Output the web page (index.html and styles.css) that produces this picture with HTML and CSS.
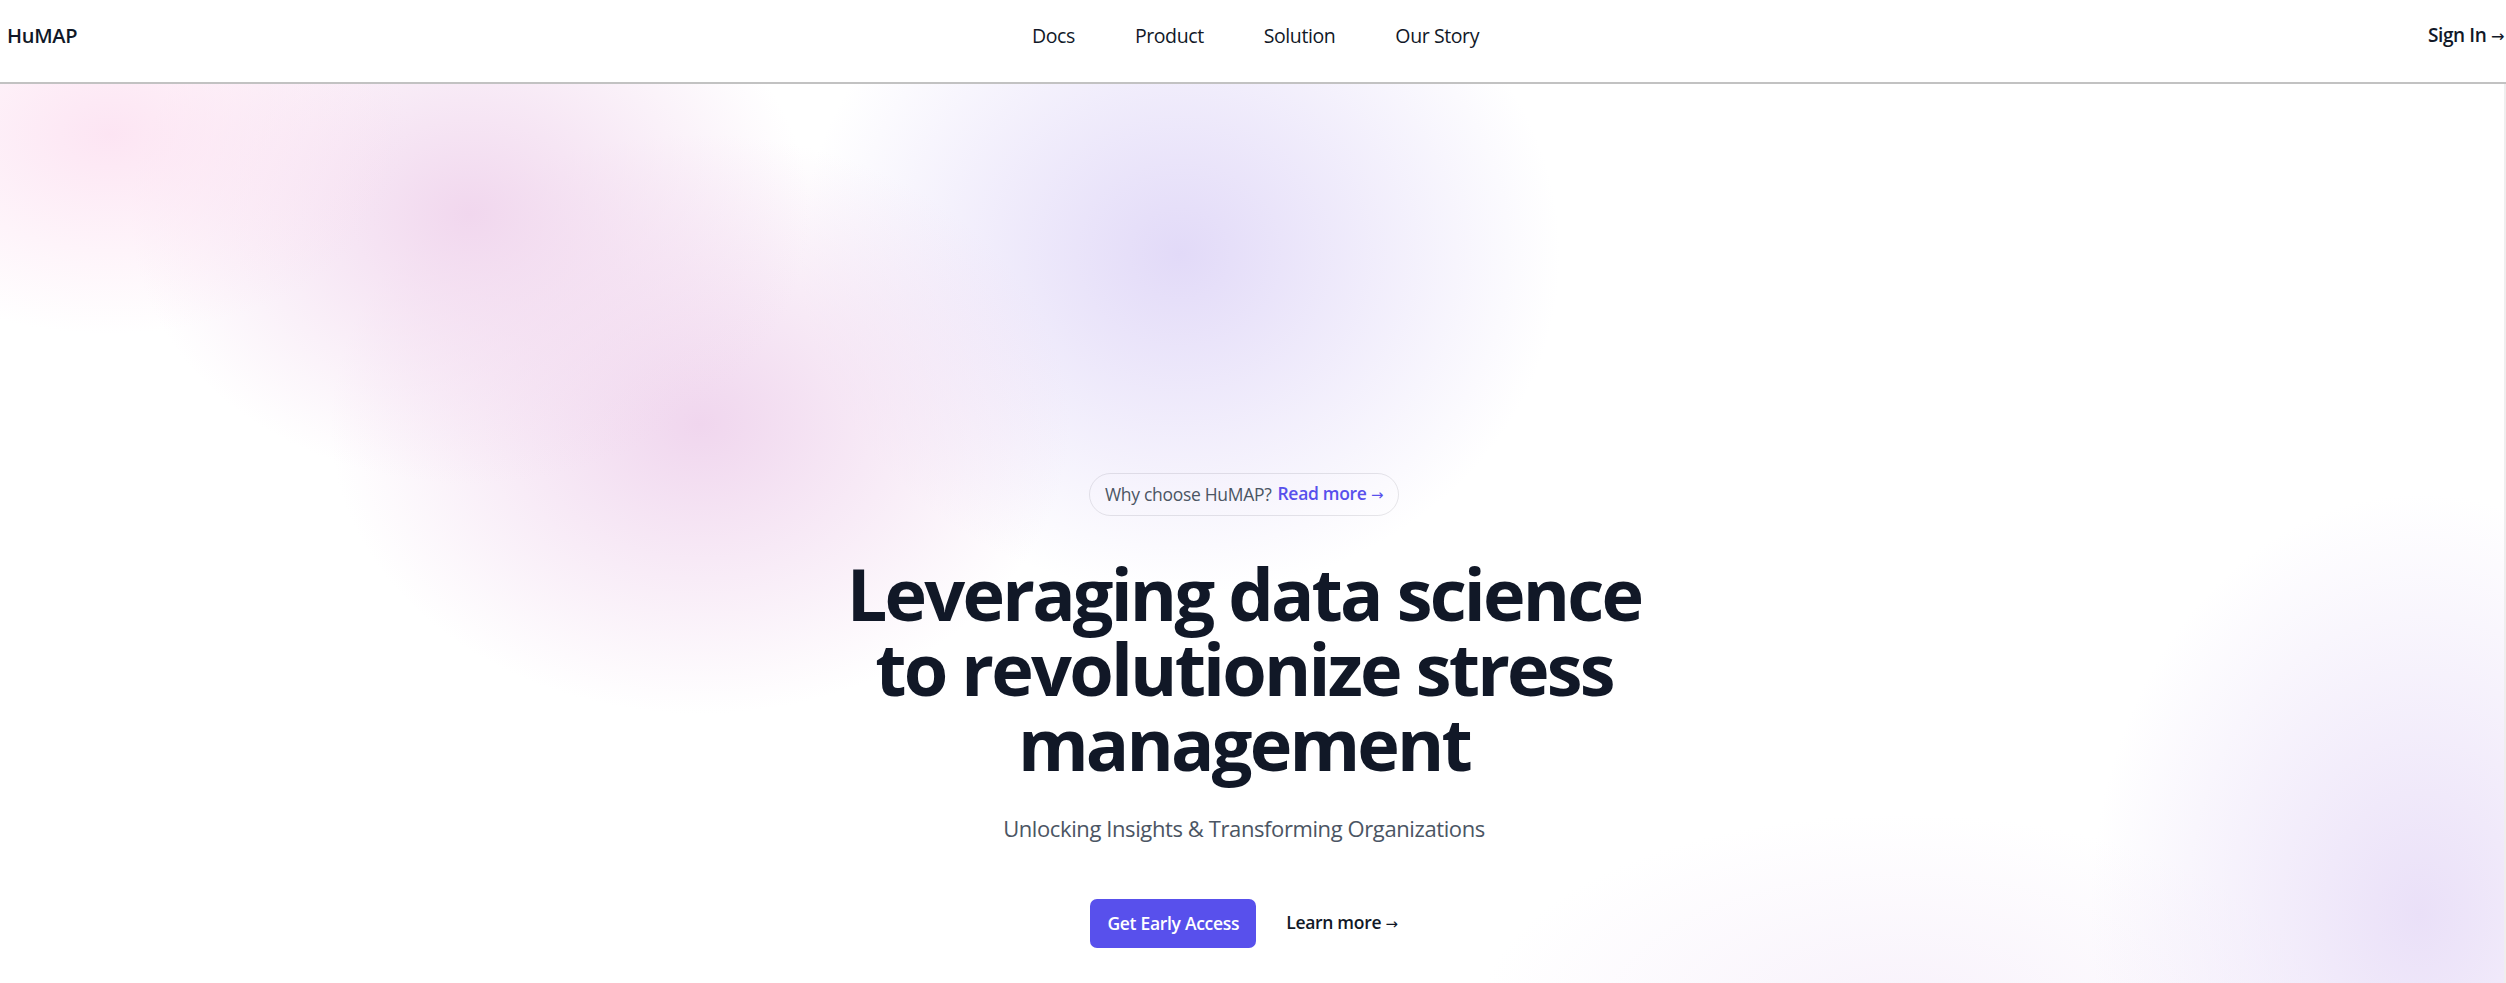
FILE: index.html
```html
<!DOCTYPE html>
<html lang="en">
<head>
<meta charset="utf-8">
<title>HuMAP</title>
<link rel="stylesheet" href="styles.css">
</head>
<body>
<header class="topbar">
  <a class="logo" href="#">HuMAP</a>
  <nav class="nav">
    <a href="#">Docs</a>
    <a href="#">Product</a>
    <a href="#">Solution</a>
    <a href="#">Our Story</a>
  </nav>
  <a class="signin" href="#">Sign In <span class="arrow">→</span></a>
</header>
<main class="hero">
  <div class="hero-inner">
    <div class="badge">Why choose HuMAP? <a href="#" class="badge-link">Read more <span class="arrow">→</span></a></div>
    <h1 class="title">Leveraging data science<br>to revolutionize stress<br>management</h1>
    <p class="subtitle">Unlocking Insights &amp; Transforming Organizations</p>
    <div class="actions">
      <a href="#" class="btn-primary">Get Early Access</a>
      <a href="#" class="btn-link">Learn more <span class="arrow">→</span></a>
    </div>
  </div>
</main>
</body>
</html>
```
FILE: styles.css
```css
* { box-sizing: border-box; }
html, body { margin: 0; padding: 0; }
body {
  font-family: "Open Sans", "Noto Sans", sans-serif;
  color: #111827;
  background: #fff;
  height: 983px;
  overflow: hidden;
}
a { text-decoration: none; color: inherit; }

.topbar {
  display: grid;
  grid-template-columns: 1fr auto 1fr;
  align-items: center;
  height: 84px;
  padding: 0 2px 12px 7px;
  border-bottom: 2px solid #c2c2c2;
}
.logo {
  font-size: 20px;
  font-weight: 600;
  color: #111827;
  letter-spacing: -0.3px;
}
.nav {
  display: flex;
  gap: 60px;
  font-size: 19.5px;
  color: #111827;
}
.nav a { letter-spacing: -0.4px; }
.signin {
  justify-self: end;
  font-size: 19px;
  font-weight: 600;
  letter-spacing: -0.4px;
}
.arrow { font-family: "DejaVu Sans", sans-serif; font-weight: 400; font-size: 0.85em; }

.hero {
  height: 899px;
  border-right: 2px solid #efefef;
  background:
    radial-gradient(ellipse 300px 200px at 110px 50px, rgba(252, 222, 240, 0.8), rgba(252, 222, 240, 0) 100%),
    radial-gradient(ellipse 340px 270px at 470px 130px, rgba(241, 215, 238, 1), rgba(241, 215, 238, 0) 100%),
    radial-gradient(ellipse 370px 290px at 700px 340px, rgba(240, 214, 238, 1), rgba(240, 214, 238, 0) 100%),
    radial-gradient(ellipse 380px 340px at 1180px 170px, rgba(226, 218, 248, 1), rgba(226, 218, 248, 0) 100%),
    radial-gradient(ellipse 330px 420px at 2420px 830px, rgba(234, 224, 248, 1), rgba(234, 224, 248, 0) 100%),
    radial-gradient(ellipse 420px 200px at 1900px 930px, rgba(246, 238, 250, 0.8), rgba(246, 238, 250, 0) 100%),
    #fff;
}
.hero-inner {
  display: flex;
  flex-direction: column;
  align-items: center;
  padding-top: 389px;
  padding-right: 16px;
  text-align: center;
}
.badge {
  display: inline-flex;
  gap: 6px;
  align-items: center;
  font-size: 17.5px;
  line-height: 25px;
  padding: 7px 15px;
  border: 1px solid rgba(17, 24, 39, 0.1);
  border-radius: 999px;
  color: #4b5563;
  letter-spacing: -0.3px;
}
.badge-link {
  color: #5850ec;
  font-weight: 600;
}
.title {
  margin: 40px 0 0;
  font-size: 72px;
  line-height: 75px;
  font-weight: 700;
  letter-spacing: -2.8px;
  color: #111827;
}
.subtitle {
  margin: 30px 0 0;
  font-size: 22px;
  line-height: 35px;
  color: #4b5563;
  letter-spacing: -0.4px;
}
.actions {
  margin-top: 53px;
  display: flex;
  align-items: center;
  gap: 30px;
}
.btn-primary {
  background: #5850ec;
  color: #fff;
  font-size: 17.5px;
  line-height: 25px;
  font-weight: 600;
  padding: 12px 17px;
  border-radius: 7px;
  letter-spacing: -0.3px;
}
.btn-link {
  font-size: 17.5px;
  line-height: 25px;
  font-weight: 600;
  color: #111827;
  letter-spacing: -0.3px;
}
```
